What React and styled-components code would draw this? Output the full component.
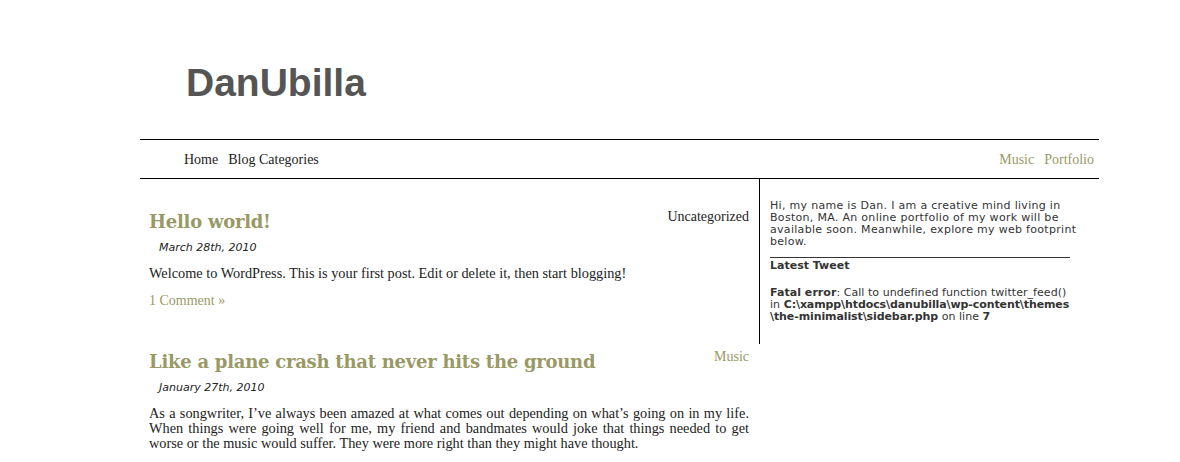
import styled, { createGlobalStyle } from "styled-components";

const GlobalStyle = createGlobalStyle`
    body {
        margin: 0;
        background: #fff;
        font-family: "Liberation Serif", serif;
    }
`;

const Page = styled.div`
    width: 959px;
    margin-left: 140px;
`;

const Header = styled.header`
    height: 139px;
    padding: 61px 0 0 46px;
    box-sizing: border-box;
`;

const SiteTitle = styled.h1`
    margin: 0;
    font-family: "Liberation Sans", Arial, sans-serif;
    font-size: 39px;
    line-height: 44px;
    font-weight: bold;
    color: #555;
`;

const Nav = styled.nav`
    display: flex;
    justify-content: space-between;
    align-items: center;
    height: 40px;
    box-sizing: border-box;
    border-top: 1px solid #000;
    border-bottom: 1px solid #000;
    padding: 2px 5px 0 44px;
`;

const NavGroup = styled.div`
    display: flex;
    gap: 10px;
`;

const NavLink = styled.a`
    font-size: 14px;
    color: ${(p) => (p.$muted ? "#999966" : "#222")};
    text-decoration: none;
`;

const Body = styled.div`
    display: flex;
    align-items: flex-start;
`;

const Main = styled.main`
    width: 619px;
    box-sizing: border-box;
    padding: 20px 10px 0 9px;
`;

const Post = styled.article`
    margin-bottom: 30px;
`;

const PostHead = styled.div`
    display: flex;
    justify-content: space-between;
    align-items: flex-start;
`;

const PostTitle = styled.h2`
    margin: 11px 0 0;
    font-family: "DejaVu Serif", Georgia, serif;
    font-size: 18px;
    letter-spacing: -0.25px;
    line-height: 24px;
    font-weight: bold;
    color: #999966;
`;

const Category = styled.span`
    margin-top: 10px;
    font-size: 14px;
    line-height: 16px;
    color: ${(p) => (p.$link ? "#999966" : "#222")};
`;

const PostDate = styled.div`
    margin: 7px 0 0 10px;
    font-family: "DejaVu Sans", Verdana, sans-serif;
    font-style: italic;
    font-size: 11px;
    color: #222;
`;

const PostText = styled.p`
    margin: 12px 0 0;
    font-size: 14.3px;
    line-height: 15px;
    color: #222;
    text-align: justify;
`;

const Comments = styled.a`
    display: block;
    margin-top: 12px;
    font-size: 14px;
    color: #999966;
    text-decoration: none;
`;

const Sidebar = styled.aside`
    width: 340px;
    height: 165px;
    box-sizing: border-box;
    border-left: 1px solid #000;
    padding: 21px 20px 0 10px;
    font-family: "DejaVu Sans", Verdana, sans-serif;
    font-size: 11px;
    line-height: 12px;
    color: #333;
    white-space: nowrap;
`;

const About = styled.p`
    margin: 0 0 2px;
    width: 300px;
    padding-bottom: 9px;
    border-bottom: 1px solid #333;
    letter-spacing: 0.3px;
`;

const WidgetTitle = styled.h3`
    margin: 0 0 15px;
    font-size: 11px;
    line-height: 12px;
    font-weight: bold;
`;

const ErrorText = styled.p`
    margin: 0;
    letter-spacing: 0.05px;
`;

const Path = styled.b`
    letter-spacing: -0.1px;
`;

export default function App() {
    return (
        <>
            <GlobalStyle />
            <Page>
                <Header>
                    <SiteTitle>DanUbilla</SiteTitle>
                </Header>
                <Nav>
                    <NavGroup>
                        <NavLink>Home</NavLink>
                        <NavLink>Blog Categories</NavLink>
                    </NavGroup>
                    <NavGroup>
                        <NavLink $muted>Music</NavLink>
                        <NavLink $muted>Portfolio</NavLink>
                    </NavGroup>
                </Nav>
                <Body>
                    <Main>
                        <Post>
                            <PostHead>
                                <PostTitle>Hello world!</PostTitle>
                                <Category>Uncategorized</Category>
                            </PostHead>
                            <PostDate>March 28th, 2010</PostDate>
                            <PostText>
                                Welcome to WordPress. This is your first post. Edit or delete it, then start blogging!
                            </PostText>
                            <Comments>1 Comment »</Comments>
                        </Post>
                        <Post>
                            <PostHead>
                                <PostTitle>Like a plane crash that never hits the ground</PostTitle>
                                <Category $link>Music</Category>
                            </PostHead>
                            <PostDate>January 27th, 2010</PostDate>
                            <PostText>
                                As a songwriter, I’ve always been amazed at what comes out depending on what’s going on in my
                                life. When things were going well for me, my friend and bandmates would joke that things
                                needed to get worse or the music would suffer. They were more right than they might have
                                thought.
                            </PostText>
                        </Post>
                    </Main>
                    <Sidebar>
                        <About>
                            Hi, my name is Dan. I am a creative mind living in
                            <br />
                            Boston, MA. An online portfolio of my work will be
                            <br />
                            available soon. Meanwhile, explore my web footprint
                            <br />
                            below.
                        </About>
                        <WidgetTitle>Latest Tweet</WidgetTitle>
                        <ErrorText>
                            <b>Fatal error</b>: Call to undefined function twitter_feed()
                            <br />
                            in <Path>C:\xampp\htdocs\danubilla\wp-content\themes</Path>
                            <br />
                            <Path>\the-minimalist\sidebar.php</Path> on line <b>7</b>
                        </ErrorText>
                    </Sidebar>
                </Body>
            </Page>
        </>
    );
}
